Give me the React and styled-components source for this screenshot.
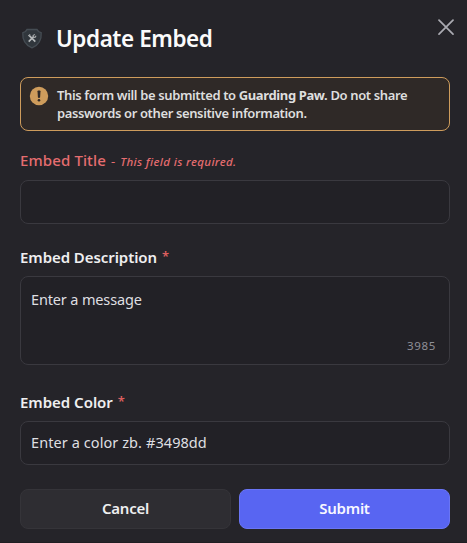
import React from 'react';
import styled, { createGlobalStyle } from 'styled-components';

const GlobalStyle = createGlobalStyle`
  * { box-sizing: border-box; }
  body { margin: 0; background: #252429; }
`;

const Dialog = styled.main`
  display: flex;
  flex-direction: column;
  width: 467px;
  height: 543px;
  padding: 0 17px 14px 20px;
  overflow: hidden;
  background: #252429;
  border-bottom: 1px solid #1f1e22;
  color: #efeff0;
  font-family: 'Noto Sans', sans-serif;
  white-space: nowrap;
`;

const Header = styled.header`
  display: flex;
  align-items: center;
  height: 77px;
  flex: none;
`;

const Title = styled.h1`
  margin: 0 0 0 12px;
  flex: 1;
  font-size: 22.5px;
  line-height: 30px;
  font-weight: 600;
  letter-spacing: -0.45px;
  color: #fbfbfb;
`;

const Close = styled.button`
  display: flex;
  align-self: flex-start;
  margin: 19px -8px 0 0;
  padding: 0;
  border: 0;
  background: none;
  color: #aaaab1;
`;

const Notice = styled.section`
  display: flex;
  gap: 8px;
  width: 430px;
  height: 54px;
  flex: none;
  padding: 8px;
  border: 1px solid #ce9c5c;
  border-radius: 8px;
  background: #2f2927;
`;

const NoticeText = styled.p`
  margin: 0;
  font-size: 13px;
  line-height: 18px;
  font-weight: 600;
  letter-spacing: -0.37px;
  color: #dedede;
  strong { font-weight: 700; }
`;

const Label = styled.label`
  display: flex;
  align-items: baseline;
  height: 22px;
  flex: none;
  margin-top: ${(p) => p.$top}px;
  margin-bottom: ${(p) => p.$bottom}px;
  font-size: 15px;
  line-height: 22px;
  font-weight: ${(p) => (p.$error ? 500 : 600)};
  letter-spacing: ${(p) => p.$spacing}px;
  color: ${(p) => (p.$error ? '#e66d70' : '#efeff0')};
`;

const Dash = styled.span`
  margin-left: 5px;
  font-size: 13px;
  font-weight: 400;
`;

const ErrorText = styled.em`
  margin-left: 5px;
  font-size: 11.5px;
  font-weight: 500;
  letter-spacing: 0.37px;
`;

const Asterisk = styled.span`
  align-self: flex-start;
  margin-left: 5px;
  font-size: 13px;
  line-height: 20px;
  color: #dc5f5e;
  font-weight: 600;
`;

const Field = styled.div`
  display: flex;
  flex-direction: column;
  justify-content: ${(p) => (p.$tall ? 'space-between' : 'center')};
  height: ${(p) => p.$height}px;
  flex: none;
  padding: ${(p) => (p.$tall ? '11px 14px 9px 10px' : '0 10px 2px')};
  border: 1px solid #3a393f;
  border-radius: 8px;
  background: #222126;
  font-size: 14.5px;
  line-height: 22px;
  letter-spacing: ${(p) => p.$spacing || 0}px;
  color: #dfdfe1;
`;

const Counter = styled.span`
  align-self: flex-end;
  margin-right: -1px;
  font-size: 11.5px;
  line-height: 18px;
  letter-spacing: 0.7px;
  color: #8f8f97;
`;

const Actions = styled.footer`
  display: grid;
  grid-template-columns: 211px 211px;
  gap: 8px;
  margin-top: 24px;
`;

const Button = styled.button`
  height: 40px;
  padding: 0 0 2px;
  border: 1px solid ${(p) => (p.$primary ? '#6a75f4' : '#353439')};
  border-radius: 8px;
  background: ${(p) => (p.$primary ? '#5865f2' : '#2e2d32')};
  color: ${(p) => (p.$primary ? '#f7f7ff' : '#efeff0')};
  font: 600 15px/20px 'Noto Sans', sans-serif;
  letter-spacing: -0.25px;
`;

const ShieldIcon = () => (
  <svg width="24" height="24" viewBox="0 0 24 24" fill="none">
    <path d="M7 2.500h10l1.500 2 2.700 1.200c.5 7.300-2.700 12.400-9.200 15.100C5.500 18.100 2.300 13 2.800 5.700L5.500 4.500Z" fill="#30363c" stroke="#454c53" strokeWidth="1.300" />
    <path d="m9.300 8.700 6 6M8.700 14.700l5-5" stroke="#b5b8ba" strokeWidth="1.700" />
    <path d="m8.200 8.900 2-1.400M13.300 10.300l-.2-1.700 1.800-1.200M13.300 10.300l1.700.1 1.100-1.700" stroke="#a8abad" strokeWidth="1.100" />
  </svg>
);

const CloseIcon = () => (
  <svg width="24" height="24" viewBox="0 0 24 24" fill="none">
    <path d="m5 1.200 14 14m0-14-14 14" stroke="currentColor" strokeWidth="1.700" strokeLinecap="round" />
  </svg>
);

const WarningIcon = () => (
  <svg width="20" height="20" viewBox="0 0 20 20">
    <circle cx="10" cy="10" r="9.200" fill="#ce9c5c" />
    <path d="M8.500 5.200q0-.8.8-.8h1.400q.8 0 .8.800l-.4 6.100q-.1.700-1.100.7t-1.100-.7Z" fill="#2f2927" />
    <circle cx="10" cy="14.200" r="1.300" fill="#2f2927" />
  </svg>
);

export default function App() {
  return (
    <>
      <GlobalStyle />
      <Dialog>
        <Header>
          <ShieldIcon />
          <Title>Update Embed</Title>
          <Close aria-label="Close"><CloseIcon /></Close>
        </Header>
        <Notice>
          <WarningIcon />
          <div>
            <NoticeText>This form will be submitted to <strong>Guarding Paw.</strong> Do not share</NoticeText>
            <NoticeText>passwords or other sensitive information.</NoticeText>
          </div>
        </Notice>
        <Label $error $top={18} $bottom={9} $spacing={0.12}>Embed Title<Dash>-</Dash><ErrorText>This field is required.</ErrorText></Label>
        <Field $height={44} />
        <Label $top={22} $bottom={8} $spacing={-0.07}>Embed Description<Asterisk>*</Asterisk></Label>
        <Field $height={89} $tall $spacing={-0.15}><span>Enter a message</span><Counter>3985</Counter></Field>
        <Label $top={26} $bottom={8} $spacing={-0.02}>Embed Color<Asterisk>*</Asterisk></Label>
        <Field $height={44} $spacing={0.08}>Enter a color zb. #3498dd</Field>
        <Actions>
          <Button>Cancel</Button>
          <Button $primary>Submit</Button>
        </Actions>
      </Dialog>
    </>
  );
}
